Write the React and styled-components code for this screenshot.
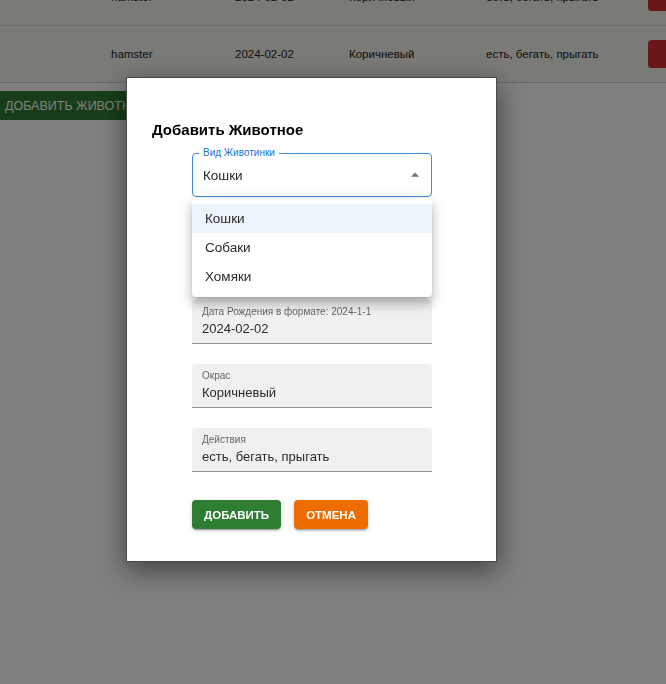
import React from 'react'
import styled, { createGlobalStyle } from 'styled-components'

const GlobalStyle = createGlobalStyle`
    body {
        margin: 0;
        background: #ffffff;
        font-family: "Liberation Sans", Arial, sans-serif;
    }
`

const animals = [
    { name: 'hamster', date: '2024-02-02', color: 'Коричневый', actions: 'есть, бегать, прыгать' },
    { name: 'hamster', date: '2024-02-02', color: 'Коричневый', actions: 'есть, бегать, прыгать' },
]

const kinds = ['Кошки', 'Собаки', 'Хомяки']

const fields = [
    { label: 'Имя', value: 'hamster' },
    { label: 'Дата Рождения в формате: 2024-1-1', value: '2024-02-02' },
    { label: 'Окрас', value: 'Коричневый' },
    { label: 'Действия', value: 'есть, бегать, прыгать' },
]

const App = () => {
    return (
        <>
            <GlobalStyle />
            <Page>
                <Table>
                    {animals.map((a, i) => (
                        <Row key={i}>
                            <Cell />
                            <Cell>{a.name}</Cell>
                            <Cell>{a.date}</Cell>
                            <Cell>{a.color}</Cell>
                            <Cell>{a.actions}</Cell>
                            <Cell><DeleteButton /></Cell>
                        </Row>
                    ))}
                </Table>
                <AddAnimalButton>Добавить животное</AddAnimalButton>
            </Page>

            <Overlay>
                <Modal>
                    <Title>Добавить Животное</Title>
                    <Form>
                        <SelectWrap>
                            <SelectBox>
                                <NotchLabel>Вид Животинки</NotchLabel>
                                <SelectValue>Кошки</SelectValue>
                                <Arrow viewBox="0 0 24 24">
                                    <path d="M7 14l5-5 5 5z" />
                                </Arrow>
                            </SelectBox>
                            <Menu>
                                {kinds.map((k, i) => (
                                    <MenuItem key={k} $active={i === 0}>{k}</MenuItem>
                                ))}
                            </Menu>
                        </SelectWrap>
                        {fields.map(f => (
                            <Field key={f.label}>
                                <FieldLabel>{f.label}</FieldLabel>
                                <FieldValue>{f.value}</FieldValue>
                            </Field>
                        ))}
                        <Buttons>
                            <Button $bg='#2e7d32'>Добавить</Button>
                            <Button $bg='#ef6c00'>Отмена</Button>
                        </Buttons>
                    </Form>
                </Modal>
            </Overlay>
        </>
    )
}

export default App;

const Page = styled.div`
    margin-top: -31px;
`

const Table = styled.div`
    background: #f4f4ec;
    border-bottom: 1px solid #cfcfcf;
`

const Row = styled.div`
    display: grid;
    grid-template-columns: 111px 124px 114px 137px 162px 1fr;
    height: 56px;
    align-items: center;
    border-bottom: 1px solid #d8d8d8;
    font-size: 11.5px;
    color: #222;

    &:last-child {
        border-bottom: none;
    }
`

const Cell = styled.div`
    white-space: nowrap;
    overflow: hidden;
`

const DeleteButton = styled.div`
    width: 60px;
    height: 28px;
    border-radius: 4px;
    background: #d32f2f;
    box-shadow: 0 1px 3px rgba(0, 0, 0, 0.3);
`

const AddAnimalButton = styled.button`
    margin-top: 8px;
    height: 29px;
    padding: 0 5px;
    border: none;
    border-radius: 0 4px 4px 0;
    background: #2e7d32;
    color: #ffffff;
    font-family: "Liberation Sans", Arial, sans-serif;
    font-size: 12.5px;
    text-transform: uppercase;
    box-shadow: 0 2px 3px rgba(0, 0, 0, 0.3);
`

const Overlay = styled.div`
    position: fixed;
    inset: 0;
    background: rgba(0, 0, 0, 0.5);
    padding: 77px 0 0 126px;
`

const Modal = styled.div`
    box-sizing: border-box;
    width: 371px;
    background: #ffffff;
    border: 1px solid #4a4a4a;
    padding: 42px 25px 32px;
    box-shadow: 0 8px 26px rgba(0, 0, 0, 0.5);
`

const Title = styled.h2`
    margin: 0 0 14px;
    font-size: 15px;
    line-height: 19px;
    font-weight: bold;
    color: #000;
`

const Form = styled.div`
    display: flex;
    flex-direction: column;
    gap: 20px;
    margin-left: 40px;
    width: 240px;
`

const SelectWrap = styled.div`
    position: relative;
    margin-bottom: 19px;
`

const SelectBox = styled.div`
    position: relative;
    box-sizing: border-box;
    height: 44px;
    display: flex;
    align-items: center;
    justify-content: space-between;
    padding: 0 6px 0 10px;
    border: 1px solid #3d8ad6;
    border-radius: 4px;
`

const NotchLabel = styled.span`
    position: absolute;
    left: 6px;
    top: -7px;
    padding: 0 4px;
    background: #ffffff;
    font-size: 10px;
    line-height: 12px;
    color: #1976d2;
`

const SelectValue = styled.span`
    font-size: 13.5px;
    color: #2a2a2a;
`

const Arrow = styled.svg`
    width: 20px;
    height: 20px;
    fill: #757575;
`

const Menu = styled.div`
    position: absolute;
    top: 46px;
    left: 0;
    right: 0;
    z-index: 2;
    padding: 5px 0 6px;
    background: #ffffff;
    border-radius: 4px;
    box-shadow: 0 5px 5px -3px rgba(0, 0, 0, 0.2), 0 8px 10px 1px rgba(0, 0, 0, 0.14), 0 3px 14px 2px rgba(0, 0, 0, 0.12);
`

const MenuItem = styled.div`
    height: 29px;
    display: flex;
    align-items: center;
    padding-left: 13px;
    font-size: 13.5px;
    color: #2a2a2a;
    background: ${p => (p.$active ? 'rgba(25, 118, 210, 0.08)' : 'transparent')};
`

const Field = styled.div`
    box-sizing: border-box;
    height: 44px;
    padding: 6px 10px 0;
    background: #f0f0f0;
    border-radius: 4px 4px 0 0;
    border-bottom: 1px solid #8f8f8f;
`

const FieldLabel = styled.div`
    font-size: 10px;
    line-height: 12px;
    color: #666;
`

const FieldValue = styled.div`
    margin-top: 2px;
    font-size: 13px;
    line-height: 18px;
    color: #2a2a2a;
`

const Buttons = styled.div`
    display: flex;
    gap: 13px;
    margin-top: 8px;
`

const Button = styled.button`
    height: 29px;
    padding: 0 12px;
    border: none;
    border-radius: 4px;
    background: ${p => p.$bg};
    color: #ffffff;
    font-family: "Liberation Sans", Arial, sans-serif;
    font-size: 11.5px;
    font-weight: bold;
    text-transform: uppercase;
    box-shadow: 0 3px 1px -2px rgba(0, 0, 0, 0.2), 0 2px 2px 0 rgba(0, 0, 0, 0.14), 0 1px 5px 0 rgba(0, 0, 0, 0.12);
`
